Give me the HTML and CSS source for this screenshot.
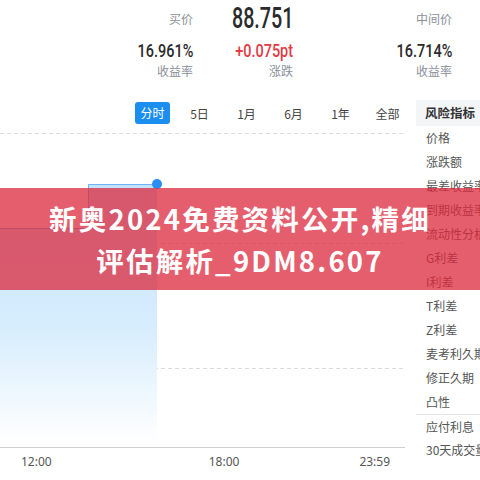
FILE: index.html
```html
<!DOCTYPE html>
<html lang="zh-CN">
<head>
<meta charset="utf-8">
<title>行情</title>
<link rel="stylesheet" href="styles.css">
</head>
<body>
<div class="page">
  <div class="header">
    <div class="cell lbl">买价</div>
    <div class="cell big"><span class="cond big-num">88.751</span></div>
    <div class="cell lbl">中间价</div>

    <div class="cell val"><span class="cond mid-num">16.961%</span></div>
    <div class="cell val"><span class="cond mid-num red">+0.075pt</span></div>
    <div class="cell val"><span class="cond mid-num">16.714%</span></div>

    <div class="cell sub">收益率</div>
    <div class="cell sub">涨跌</div>
    <div class="cell sub">收益率</div>
  </div>

  <div class="body">
    <div class="main">
      <div class="tabs">
        <div class="tab"><span class="tab-active">分时</span></div>
        <div class="tab">5日</div>
        <div class="tab">1月</div>
        <div class="tab">6月</div>
        <div class="tab">1年</div>
        <div class="tab">全部</div>
      </div>
      <svg class="chart" width="405" height="320" viewBox="0 0 405 320">
        <defs>
          <linearGradient id="fill" x1="0" y1="56" x2="0" y2="315" gradientUnits="userSpaceOnUse">
            <stop offset="0" stop-color="#c4e2fc"/>
            <stop offset="0.55" stop-color="#d6edfd"/>
            <stop offset="1" stop-color="#ffffff"/>
          </linearGradient>
        </defs>
        <line x1="0" y1="5.5" x2="405" y2="5.5" class="dash"/>
        <line x1="0" y1="115.5" x2="405" y2="115.5" class="dash"/>
        <line x1="0" y1="240.5" x2="405" y2="240.5" class="dash"/>
        <path d="M0 100 H88 V56 H157 V318 H0 Z" fill="url(#fill)"/>
        <path d="M0 100.5 H88.5 V56.5 H157" fill="none" stroke="#6fb3f2" stroke-width="1"/>
        <line x1="0" y1="319.5" x2="405" y2="319.5" class="axis"/>
        <circle cx="157" cy="56" r="5" fill="#2a8ef2"/>
      </svg>
      <div class="times">
        <span class="t t1">12:00</span>
        <span class="t t2">18:00</span>
        <span class="t t3">23:59</span>
      </div>
    </div>
    <div class="side">
      <div class="side-head">风险指标</div>
      <ul class="side-list">
        <li>价格</li>
        <li>涨跌额</li>
        <li>最差收益率</li>
        <li>到期收益率</li>
        <li>流动性分析</li>
        <li>G利差</li>
        <li>I利差</li>
        <li>T利差</li>
        <li>Z利差</li>
        <li>麦考利久期</li>
        <li>修正久期</li>
        <li>凸性</li>
        <li class="sep">应付利息</li>
        <li>30天成交量</li>
      </ul>
    </div>
  </div>

  <div class="banner">
    <div class="banner-line">新奥2024免费资料公开,精细</div>
    <div class="banner-line">评估解析_9DM8.607</div>
  </div>
</div>
</body>
</html>
```
FILE: styles.css
```css
* { box-sizing: border-box; }
html, body { margin: 0; padding: 0; background: #fff; }
body {
  font-family: "Noto Sans CJK SC", "Noto Sans", sans-serif;
  color: #333;
}
.page {
  position: relative;
  width: 480px;
  height: 480px;
  overflow: hidden;
}

/* header quote block */
.header {
  display: grid;
  grid-template-columns: 193px 100px 159px;
  grid-template-rows: 36px 28px 14px;
  height: 100px;
}
.cell {
  display: flex;
  align-items: center;
  justify-content: flex-end;
  white-space: nowrap;
}
.lbl { font-size: 12px; color: #8a8f99; }
.sub { font-size: 12px; color: #8a8f99; line-height: 14px; }
.cond {
  display: inline-block;
  font-family: "Roboto", "Liberation Sans", sans-serif;
  transform-origin: right center;
}
.big-num {
  font-size: 29px;
  font-weight: 500;
  color: #2b2b2b;
  transform: scaleX(0.68);
}
.mid-num {
  font-size: 19px;
  font-weight: 500;
  color: #2b2b2b;
  transform: scaleX(0.76);
}
.red { color: #e23b45; }

/* body */
.body {
  display: flex;
}
.main {
  width: 416px;
}
.tabs {
  display: flex;
  height: 26px;
  padding-left: 129px;
  align-items: center;
}
.tab {
  width: 47px;
  text-align: center;
  font-size: 12px;
  color: #444;
}
.tab-active {
  display: inline-block;
  background: #1c8ef0;
  color: #fff;
  border-radius: 3px;
  height: 22px;
  line-height: 22px;
  padding: 0 5px;
}
.chart {
  display: block;
  margin-top: 2px;
}
.dash {
  stroke: #dcdcdc;
  stroke-width: 1;
  stroke-dasharray: 4 3;
}
.axis {
  stroke: #cfcfcf;
  stroke-width: 1;
}
.times {
  display: flex;
  height: 26px;
  align-items: center;
  font-family: "Noto Sans", "Liberation Sans", sans-serif;
  font-size: 12px;
  color: #555;
}
.t { display: block; }
.t1 { margin-left: 21px; }
.t2 { margin-left: 157px; }
.t3 { margin-left: 120px; }

/* sidebar */
.side {
  width: 64px;
  overflow: hidden;
  white-space: nowrap;
}
.side-head {
  height: 26px;
  line-height: 26px;
  background: #f4f5f7;
  padding-left: 9px;
  font-size: 12.5px;
  font-weight: 700;
  color: #333;
}
.side-list {
  list-style: none;
  margin: 0;
  padding: 0;
}
.side-list li {
  height: 24px;
  line-height: 24px;
  padding-left: 10px;
  font-size: 12px;
  color: #555;
}
.side-list li.sep {
  border-top: 1px solid #e3e3e3;
}

/* overlay banner */
.banner {
  position: absolute;
  left: 0;
  right: 0;
  top: 188px;
  height: 102px;
  padding-top: 9px;
  background: rgba(220, 40, 60, 0.75);
  text-align: center;
}
.banner-line {
  font-size: 27.5px;
  line-height: 42px;
  font-weight: 700;
  color: #fff;
  letter-spacing: 2.2px;
  white-space: nowrap;
}
```
